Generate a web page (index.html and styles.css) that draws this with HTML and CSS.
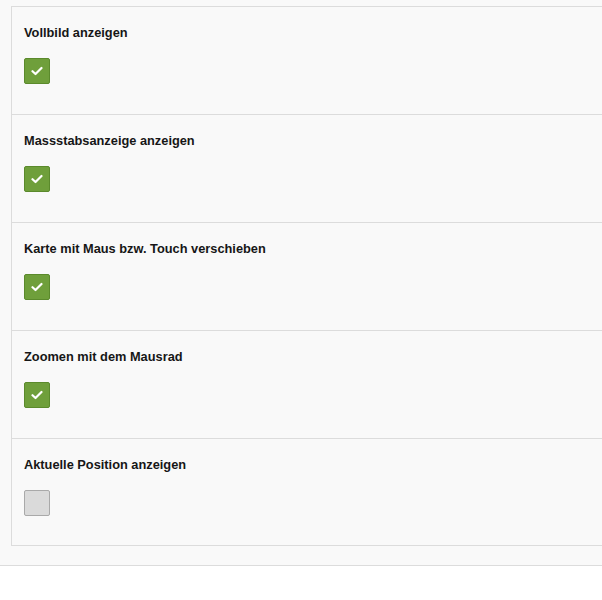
FILE: index.html
```html
<!DOCTYPE html>
<html lang="de">
<head>
    <meta charset="UTF-8">
    <title>Karteneinstellungen</title>
    <link rel="stylesheet" href="styles.css">
</head>
<body>
    <div class="panel">
        <div class="settings">
            <div class="setting">
                <div class="setting-label">Vollbild anzeigen</div>
                <span class="check is-checked">
                    <svg viewBox="0 0 12 10" width="12" height="10"><path d="M1.5 5.2 L4.5 8 L10.5 2" fill="none" stroke="#fff" stroke-width="2.2" stroke-linecap="round" stroke-linejoin="round"/></svg>
                </span>
            </div>
            <div class="setting">
                <div class="setting-label">Massstabsanzeige anzeigen</div>
                <span class="check is-checked">
                    <svg viewBox="0 0 12 10" width="12" height="10"><path d="M1.5 5.2 L4.5 8 L10.5 2" fill="none" stroke="#fff" stroke-width="2.2" stroke-linecap="round" stroke-linejoin="round"/></svg>
                </span>
            </div>
            <div class="setting">
                <div class="setting-label">Karte mit Maus bzw. Touch verschieben</div>
                <span class="check is-checked">
                    <svg viewBox="0 0 12 10" width="12" height="10"><path d="M1.5 5.2 L4.5 8 L10.5 2" fill="none" stroke="#fff" stroke-width="2.2" stroke-linecap="round" stroke-linejoin="round"/></svg>
                </span>
            </div>
            <div class="setting">
                <div class="setting-label">Zoomen mit dem Mausrad</div>
                <span class="check is-checked">
                    <svg viewBox="0 0 12 10" width="12" height="10"><path d="M1.5 5.2 L4.5 8 L10.5 2" fill="none" stroke="#fff" stroke-width="2.2" stroke-linecap="round" stroke-linejoin="round"/></svg>
                </span>
            </div>
            <div class="setting">
                <div class="setting-label">Aktuelle Position anzeigen</div>
                <span class="check"></span>
            </div>
        </div>
    </div>
</body>
</html>
```

FILE: styles.css
```css
body {
    margin: 0;
    font-family: 'Liberation Sans', Arial, sans-serif;
    color: #222;
    background-color: #fff;
}

.panel {
    background-color: #f9f9f9;
    padding: 6px 0 19px 11px;
    border-bottom: 1px solid #dcdcdc;
}

.settings {
    border-left: 1px solid #dcdcdc;
    border-bottom: 1px solid #dcdcdc;
}

.setting {
    border-top: 1px solid #dcdcdc;
    padding: 18px 12px 30px;
}

.setting:last-child {
    padding-bottom: 29px;
}

.setting-label {
    font-size: 12.8px;
    font-weight: 700;
    line-height: 16px;
    margin-bottom: 17px;
    color: #161616;
}

.check {
    display: flex;
    align-items: center;
    justify-content: center;
    width: 24px;
    height: 24px;
    border: 1px solid #a9a9a9;
    border-radius: 2px;
    background-color: #dadada;
    box-sizing: content-box;
}

.check.is-checked {
    background-color: #6f9f3b;
    border-color: #5b8a2c;
}
```
